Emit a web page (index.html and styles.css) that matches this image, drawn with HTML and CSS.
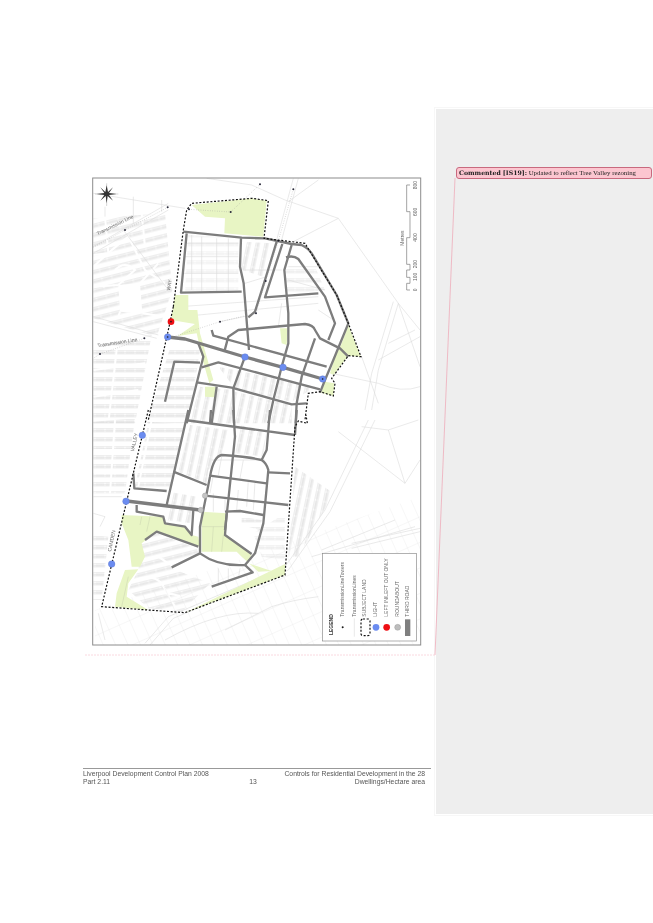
FILE: index.html
```html
<!DOCTYPE html>
<html lang="en">
<head>
<meta charset="utf-8">
<title>Liverpool Development Control Plan 2008</title>
<link rel="stylesheet" href="styles.css">
</head>
<body>
<div class="page">
  <main class="sheet">
    <svg class="map" viewBox="85 170 350 490" width="350" height="490" role="img" aria-label="Road network map">
      <defs>
        <clipPath id="frame"><rect x="92.7" y="178" width="328" height="467"/></clipPath>
        <pattern id="lots" width="30" height="27" patternUnits="userSpaceOnUse">
          <path d="M0 2H30M0 7H30M0 12H30M6 2V12M12 2V12M18 2V12M24 2V12M3 7V12M9 7V12M15 7V12M21 7V12M27 7V12" class="pat"/>
        </pattern>
        <pattern id="lotsTilt" width="30" height="27" patternUnits="userSpaceOnUse" patternTransform="rotate(-14)">
          <path d="M0 2H30M0 7H30M0 12H30M6 2V12M12 2V12M18 2V12M24 2V12M3 7V12M9 7V12M15 7V12M21 7V12M27 7V12" class="pat"/>
        </pattern>
        <pattern id="lotsUp" width="26" height="30" patternUnits="userSpaceOnUse" patternTransform="rotate(12)">
          <path d="M2 0V30M7 0V30M12 0V30M2 6H12M2 12H12M2 18H12M2 24H12M7 3H12M7 9H12M7 15H12M7 21H12M7 27H12" class="pat"/>
        </pattern>
        <pattern id="wide" width="34" height="70" patternUnits="userSpaceOnUse" patternTransform="rotate(-24)">
          <path d="M0 0H34M0 0V70" class="patw"/>
        </pattern>
      </defs>
      <rect x="92.7" y="178" width="328" height="467" class="paper"/>
      <g clip-path="url(#frame)">
        <!-- upper half, in 3x crop coordinates -->
        <g transform="translate(85 170) scale(.33333)">
          <path class="hatch" d="M25 145L240 130 262 360 215 500 25 445Z" fill="url(#lotsTilt)"/>
          <path class="hatch" d="M25 530L200 495 150 760 25 760Z" fill="url(#lots)"/>
          <path class="white" d="M100 345L165 340 172 430 105 425Z"/>
          <path class="street" d="M25 290Q90 230 130 200L180 300 240 340M90 300Q120 270 150 300L100 345M25 350L100 345M165 340L220 280M172 430L240 440M60 140L70 250 25 255M170 130L180 230M100 440L105 425M25 600L180 580M95 540L70 760M25 680L160 660"/>
          <path class="hatch" d="M310 195L460 205 460 360 300 365Z" fill="url(#lots)" opacity=".5"/>
          <path class="hatch" d="M600 285L690 290 720 360 600 375Z" fill="url(#lots)" opacity=".7"/>
          <path class="hatch" d="M255 535L345 540 310 760 185 760Z" fill="url(#lots)"/>
          <path class="hatch" d="M400 590L690 650 620 695 450 655Z" fill="url(#lotsUp)"/>
          <path class="hatch" d="M345 650L445 660 440 760 310 760Z" fill="url(#lotsUp)"/>
          <path class="hatch" d="M450 665L620 705 620 760 450 760Z" fill="url(#lotsUp)"/>
          <path class="hatch" d="M475 215L560 220 535 320 470 300Z" fill="url(#lotsUp)"/>
          <path class="thin" d="M365 25L500 45 600 90 760 145 940 400 1005 590M640 25L590 210M625 25L575 210M760 145L625 215M25 70L300 115M700 30L610 95M940 400L880 600 860 720M925 395L860 610 840 720M880 570L1005 500M1005 650Q950 670 880 640L740 610M830 560L880 700M25 440L220 495M25 455L215 505M25 230L250 100M25 250L250 120M115 180L250 360M940 400L1005 480M990 480L910 520M145 160V80M60 110V140M230 90V125"/>
          <path class="thin" d="M300 220H460M300 260H460M295 310H460M320 195V360M350 200V365M395 205V365M430 205V365M480 300H590M480 340L545 320M610 290H700M610 330L720 360M285 410L700 380M290 440L700 400M590 400L580 470M700 420L745 450M405 455L500 435"/>
          <path class="green" d="M320 105L500 85 545 92 535 200 418 190 420 145 360 140Z"/>
          <path class="green" d="M270 375L310 375 310 420 337 420 345 490 385 630 373 640 353 570 335 490 278 498 330 462 258 450Z"/>
          <path class="green" d="M360 650L395 650 390 682 360 680Z"/>
          <path class="green" d="M585 475L608 475 605 525 590 520Z"/>
          <path class="green" d="M790 465L828 560 790 557 745 615 735 610 755 545 768 525Z"/>
          <path class="green" d="M720 635L748 640 745 678 708 668Z"/>
          <path class="road" d="M295 185L470 203 540 205 620 222 650 225Q670 235 680 250L755 375 790 460 745 570 720 630 705 668"/>
          <path class="road" d="M305 190L288 368 470 365"/>
          <path class="road" d="M468 205L465 290 476 340 492 540"/>
          <path class="road" d="M575 215L540 330 510 425 490 442M592 222L540 382 700 370"/>
          <path class="road" d="M620 225L598 300 610 430 610 520 590 590 565 690 550 760"/>
          <path class="road" d="M603 262Q625 255 640 267L720 380 750 460 730 510"/>
          <path class="road" d="M380 480L385 497 725 590"/>
          <path class="road" d="M418 545L430 500 460 480 660 462Q685 465 690 480L705 505 765 535 790 560"/>
          <path class="road" d="M690 505L650 620 635 700 632 760"/>
          <path class="road" d="M340 520L355 560 305 760"/>
          <path class="road" d="M240 695L268 575 345 578"/>
          <path class="road" d="M350 592L400 577 705 658"/>
          <path class="road" d="M335 637L440 653 620 703 665 700"/>
          <path class="road" d="M480 560L445 655 447 760M395 650L380 760"/>
          <path class="road wide" d="M248 501L300 507 480 561 594 592 713 627"/>
          <path class="dots" d="M248 112L120 180 25 232M312 118L437 126 525 43M625 58L580 212 542 333 513 430 405 455 272 498M178 505L45 552 25 565"/>
          <g class="tower">
            <circle cx="525" cy="43" r="3"/><circle cx="625" cy="58" r="3"/><circle cx="248" cy="112" r="3"/><circle cx="312" cy="118" r="3"/><circle cx="437" cy="126" r="3"/><circle cx="120" cy="180" r="3"/><circle cx="580" cy="212" r="3"/><circle cx="542" cy="333" r="3"/><circle cx="513" cy="430" r="3"/><circle cx="405" cy="455" r="3"/><circle cx="178" cy="505" r="3"/><circle cx="45" cy="552" r="3"/>
          </g>
          <path class="boundary" d="M265 410L250 480 190 750M265 410L295 180 305 120 320 100 500 85 550 92 537 205 660 220 755 375 790 460 828 560 790 557 740 625 750 640 745 678 705 665 670 670 660 750"/>
          <text class="lbl" transform="translate(38 196) rotate(-26)">Transmission Line</text>
          <text class="lbl" transform="translate(38 532) rotate(-9)">Transmission Line</text>
          <text class="lbl" transform="translate(255 362) rotate(-80)">WAY</text>
          <!-- compass -->
          <path class="axis" d="M65 40V108M30 72H100"/>
          <path class="compass" d="M65 46L69 66 84 52 72 69 95 72 72 75 84 92 68 78 65 100 62 78 46 92 58 75 35 72 58 69 46 52 61 66Z"/>
          <!-- scale bar -->
          <path class="scale" d="M975 45H965V125H975V203H965V283H975V300H965V322H975V340H965V360H975"/>
          <text class="lbl" transform="translate(995 58) rotate(-90)">800</text>
          <text class="lbl" transform="translate(995 138) rotate(-90)">600</text>
          <text class="lbl" transform="translate(995 215) rotate(-90)">400</text>
          <text class="lbl" transform="translate(995 295) rotate(-90)">200</text>
          <text class="lbl" transform="translate(995 333) rotate(-90)">100</text>
          <text class="lbl" transform="translate(995 364) rotate(-90)">0</text>
          <text class="lbl" transform="translate(957 227) rotate(-90)">Metres</text>
        </g>
        <!-- lower half, in 3x crop coordinates -->
        <g transform="translate(85 410) scale(.33333)">
          <path class="hatch" d="M25 35L150 25 120 250 25 250Z" fill="url(#lots)"/>
          <path class="hatch" d="M25 375L70 380 50 570 25 570Z" fill="url(#lots)"/>
          <path class="hatch" d="M190 35L300 45 255 240 150 230Z" fill="url(#lots)"/>
          <path class="street" d="M90 30L75 250M25 120H140M25 190H130M200 30L160 230"/>
          <path class="hatch" d="M315 45L430 60 410 130 370 180 365 220 280 185Z" fill="url(#lotsUp)"/>
          <path class="hatch" d="M460 45L545 60 535 140 450 130Z" fill="url(#lotsUp)"/>
          <path class="hatch" d="M250 245L335 260 320 340 240 330Z" fill="url(#lotsUp)"/>
          <path class="hatch" d="M170 400L215 370 335 415 340 430 260 475 375 520 290 605 190 595 130 540 160 480Z" fill="url(#lotsTilt)"/>
          <path class="street" d="M150 510Q200 490 230 520L270 590M220 440Q260 470 330 500M180 560Q230 540 290 560"/>
          <path class="hatch" d="M630 170L745 250 640 440 610 440Z" fill="url(#lotsUp)"/>
          <path class="hatch" d="M505 370L600 310 600 450 530 440Z" fill="url(#lots)" opacity=".7"/>
          <path class="hatch" d="M470 320L530 330 525 360 470 345Z" fill="url(#lots)"/>
          <path class="hatch" d="M30 600L1005 260 1005 705 30 705Z" fill="url(#wide)"/>
          <path class="white" d="M713 430H995V693H713Z"/>
          <path class="thin" d="M180 700L250 620 600 470 720 300 850 30M195 705L265 625 610 480 735 305 870 30M800 400L1005 355M800 415L1005 365M710 420L930 330M680 440L990 350M760 65L960 220 1005 150M910 60L960 220M830 50L910 60 1000 30M25 260H110M25 310L60 320 45 350M40 610L60 690M380 150H540M385 195L375 250M475 150L465 205M410 140L400 195M385 250V305M420 305V260M460 240L455 300M490 210L485 290M510 215L505 300M350 350H420M385 360L380 425M415 375L410 425M430 475V510M400 475V525M465 475L460 505M240 690Q400 600 520 610M420 660L560 590Q620 570 700 560"/>
          <path class="green" d="M110 315L235 320 240 340 300 350 320 375 340 380 345 410 215 365 170 400 180 440 165 470 140 470 130 390 110 340Z"/>
          <path class="green" d="M120 480L160 478 130 520 125 560 190 600 90 590 95 550Z"/>
          <path class="green" d="M350 305L425 310 420 375 500 430 490 460 560 483 520 485 470 440 455 425 350 425Z"/>
          <path class="green" d="M300 608L600 462 600 495Z"/>
          <path class="thin lgreen" d="M350 350H420M385 350L380 425M415 375L410 425M195 320L185 365M170 320L165 345M130 500L110 590"/>
          <path class="road" d="M310 0L245 285M300 30L630 75M445 0L450 80 430 270 420 360M378 0L375 40M555 0L545 120 530 150M635 0L630 75"/>
          <path class="road" d="M530 150Q490 140 410 135 385 140 375 200L345 350V430Q400 470 480 465L510 430 535 340 550 180Q545 160 530 150Z"/>
          <path class="road" d="M265 185L365 225M375 197L545 220M360 257L610 285M145 190L148 235 245 243"/>
          <path class="road" d="M155 285V305L235 320 240 340 300 350 320 375 325 300M180 390L215 365 340 410M345 430L260 472M425 310L420 375 500 432M420 305L465 303 535 315M480 465L503 487 380 530M550 187L615 190"/>
          <path class="road wide" d="M125 273L345 300"/>
          <path class="boundary" d="M190 0L50 590 300 608 600 495 630 50 640 33 667 40 663 15"/>
          <g class="light">
            <circle cx="172" cy="76" r="10"/><circle cx="123" cy="274" r="10"/><circle cx="80" cy="462" r="10"/>
          </g>
          <g class="round">
            <circle cx="360" cy="257" r="8"/><circle cx="347" cy="300" r="8"/>
          </g>
          <text class="lbl" transform="translate(147 125) rotate(-78)">VALLEY</text>
          <text class="lbl" transform="translate(78 425) rotate(-78)">CAMDEN</text>
          <!-- legend -->
          <rect class="legend" x="713" y="430" width="282" height="263"/>
          <text class="lbl strong" transform="translate(743 675) rotate(-90)">LEGEND</text>
          <text class="lbl" transform="translate(778 620) rotate(-90)">TransmissionLineTowers</text>
          <text class="lbl" transform="translate(812 620) rotate(-90)">TransmissionLines</text>
          <text class="lbl" transform="translate(844 620) rotate(-90)">SUBJECT LAND</text>
          <text class="lbl" transform="translate(877 620) rotate(-90)">LIGHT</text>
          <text class="lbl" transform="translate(910 620) rotate(-90)">LEFT IN/LEFT OUT ONLY</text>
          <text class="lbl" transform="translate(942 620) rotate(-90)">ROUNDABOUT</text>
          <text class="lbl" transform="translate(973 620) rotate(-90)">THIRD ROAD</text>
          <circle cx="773" cy="652" r="3" class="dark"/>
          <path class="thin" d="M808 625V680"/>
          <rect class="boundary" x="828" y="627" width="27" height="50" rx="6"/>
          <circle cx="873" cy="652" r="10" class="lblue"/>
          <circle cx="905" cy="652" r="10" class="lred"/>
          <circle cx="938" cy="652" r="9" class="lgrey"/>
          <rect x="960" y="628" width="16" height="50" class="lroad"/>
        </g>
        <g transform="translate(85 170) scale(.33333)">
          <g class="light">
            <circle cx="248" cy="501" r="10"/><circle cx="480" cy="561" r="10"/><circle cx="594" cy="592" r="10"/><circle cx="713" cy="627" r="10"/>
          </g>
          <circle cx="258" cy="455" r="10" class="lred"/>
          <circle cx="258" cy="455" r="2.5" class="dark"/>
          <circle cx="248" cy="501" r="2.5" class="dark"/>
          <circle cx="713" cy="627" r="2.5" class="dark"/>
        </g>
      </g>
      <rect x="92.7" y="178" width="328" height="467" class="frame"/>
    </svg>
    <footer class="foot">
      <div>Liverpool Development Control Plan 2008<br>Part 2.11</div>
      <div class="num">13</div>
      <div class="right">Controls for Residential Development in the 28<br>Dwellings/Hectare area</div>
    </footer>
  </main>
  <aside class="markup">
    <div class="balloon"><b>Commented [IS19]:</b> Updated to reflect Tree Valley rezoning</div>
  </aside>
  <svg class="leader" viewBox="0 0 653 923" width="653" height="923" aria-hidden="true">
    <path class="lead" d="M455 178L435 655"/>
    <path class="lead dash" d="M435 655H84"/>
  </svg>
</div>
</body>
</html>
```
FILE: styles.css
```css
html, body {
  margin: 0;
  padding: 0;
  background: #fff;
}

.page {
  position: relative;
  display: flex;
  width: 653px;
  height: 923px;
  overflow: hidden;
  background: #fff;
  font-family: "Liberation Sans", Arial, sans-serif;
}

.sheet {
  flex: none;
  width: 436px;
  padding-top: 170px;
  box-sizing: border-box;
}

.map {
  display: block;
  margin-left: 85px;
  filter: blur(.35px);
}

.paper { fill: #fff; }
.frame { fill: none; stroke: #8c8c8c; stroke-width: 1; }
.pat { fill: none; stroke: #cfcfcf; stroke-width: 1.1; }
.patw { fill: none; stroke: #e4e4e4; stroke-width: 1.6; }
.hatch { stroke: none; }
.white { fill: #fff; }
.street { fill: none; stroke: #fff; stroke-width: 6; }
.thin { fill: none; stroke: #dcdcdc; stroke-width: 1.8; }
.lgreen { stroke: #cfd8b4; }
.green { fill: #e8f5c4; stroke: none; }
.road { fill: none; stroke: #7d7d7d; stroke-width: 7; stroke-linejoin: round; }
.wide { stroke-width: 10; }
.dots { fill: none; stroke: #9a9a9a; stroke-width: 1.6; stroke-dasharray: 2 5; }
.tower { fill: #2a2a3a; }
.boundary { fill: none; stroke: #111; stroke-width: 3.6; stroke-dasharray: 6 5; }
.light { fill: #6b8cf0; stroke: #5a73c8; stroke-width: 1; }
.round { fill: #c4c4c4; stroke: #8d8d8d; stroke-width: 1; }
.lred { fill: #ee0f14; }
.lblue { fill: #6b8cf0; }
.lgrey { fill: #bdbdbd; stroke: #888; stroke-width: 1; }
.lroad { fill: #7f7f7f; }
.dark { fill: #1a1a1a; }
.compass { fill: #333; }
.axis { fill: none; stroke: #aaa; stroke-width: 1.5; }
.scale { fill: none; stroke: #777; stroke-width: 2; }
.legend { fill: #fff; stroke: #8a8a8a; stroke-width: 2; }
.lbl { font: 15px "Liberation Sans", Arial, sans-serif; fill: #666; }
.strong { font-weight: 700; fill: #333; }

.foot {
  display: grid;
  grid-template-columns: 155px 30px 1fr;
  width: 342px;
  margin: 108px 0 0 83px;
  padding: 1px 6px 0 0;
  border-top: 1px solid #999;
  color: #555;
  font-size: 6.8px;
  line-height: 7.6px;
  filter: blur(.2px);
}

.num {
  align-self: end;
  text-align: center;
}

.right { text-align: right; }

.markup {
  flex: none;
  width: 217px;
  height: 705px;
  margin-top: 109px;
  padding: 58px 1px 0 20px;
  box-sizing: border-box;
  background: #eee;
  outline: 1px solid #f7f7f7;
  outline-offset: 1px;
}

.balloon {
  height: 12px;
  padding-left: 2px;
  box-sizing: border-box;
  border: 1px solid #c8697e;
  border-radius: 3px;
  background: #fcc6d0;
  color: #222;
  font-family: "Liberation Serif", "Times New Roman", serif;
  font-size: 6.8px;
  line-height: 10px;
  white-space: nowrap;
  filter: blur(.15px);
}

.balloon b {
  font-family: "DejaVu Serif", serif;
  font-size: 6.2px;
}

.leader {
  position: absolute;
  left: 0;
  top: 0;
  pointer-events: none;
}

.lead { fill: none; stroke: #eeb3c0; stroke-width: .9; }
.dash { stroke: #f9d5dd; stroke-dasharray: 2 1; }
```
